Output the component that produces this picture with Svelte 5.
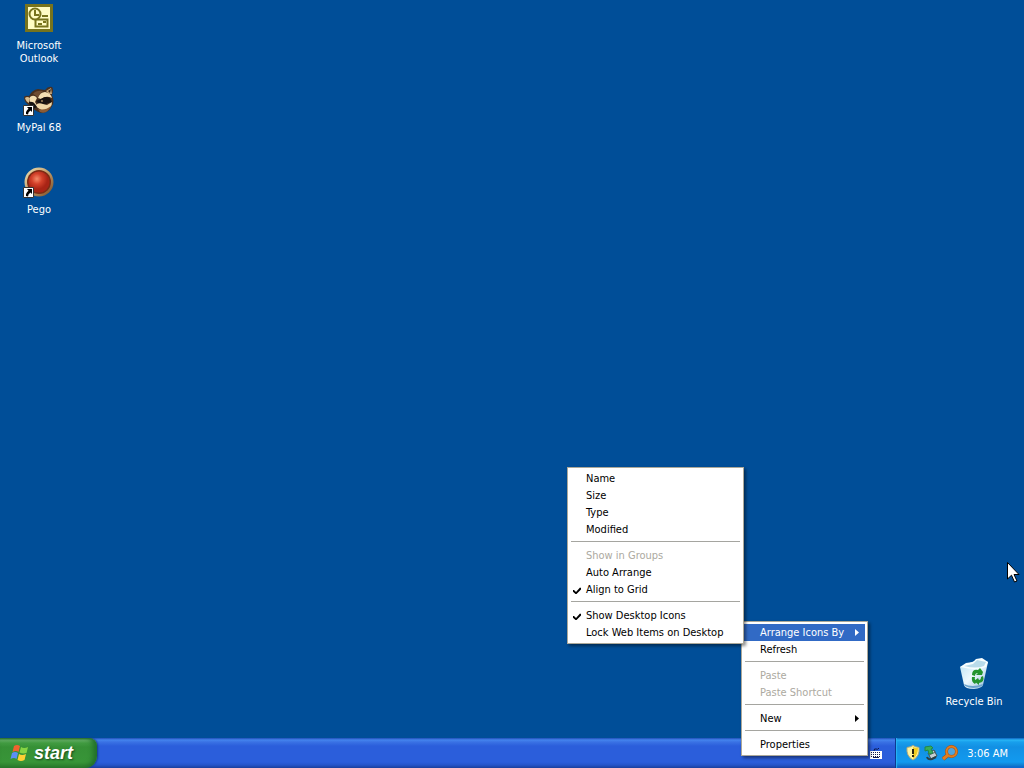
<script>
  const shortcuts = [
    { id: 'outlook', label: 'Microsoft Outlook' },
    { id: 'mypal', label: 'MyPal 68' },
    { id: 'pego', label: 'Pego' }
  ];

  const arrangeItems = [
    { label: 'Name' },
    { label: 'Size' },
    { label: 'Type' },
    { label: 'Modified' },
    { separator: true },
    { label: 'Show in Groups', disabled: true },
    { label: 'Auto Arrange' },
    { label: 'Align to Grid', checked: true },
    { separator: true },
    { label: 'Show Desktop Icons', checked: true },
    { label: 'Lock Web Items on Desktop' }
  ];

  const menuItems = [
    { label: 'Arrange Icons By', arrow: true, open: true, children: arrangeItems },
    { label: 'Refresh' },
    { separator: true },
    { label: 'Paste', disabled: true },
    { label: 'Paste Shortcut', disabled: true },
    { separator: true },
    { label: 'New', arrow: true },
    { separator: true },
    { label: 'Properties' }
  ];
</script>

{#snippet shortcutBadge()}
  <path d="M0.500 21.500h10v10h-10z" fill="#fff" stroke="#333" />
  <path d="M4 23h5v5L7.500 26.500Q5 28 5 30.500L3 30Q2.500 27 5.500 24.800z" fill="#000" />
{/snippet}

{#snippet menuList(items)}
  <ul class="menu" role="menu">
    {#each items as item}
      {#if item.separator}
        <li class="separator" role="separator"></li>
      {:else}
        <li class="entry" role="none">
          <button class="command" class:open={item.open} role="menuitem" disabled={item.disabled}>
            {#if item.checked}
              <svg class="check" width="8" height="8" viewBox="0 0 8 8" aria-hidden="true">
                <path d="M0 3h1l2 2L7 0.500L8 1v1.500L3.500 7h-1L0 4.800z" fill="#000" />
              </svg>
            {/if}
            {item.label}
            {#if item.arrow}
              <svg class="arrow" width="4" height="7" viewBox="0 0 4 7" aria-hidden="true">
                <path d="M0 0v7L4 3.500z" fill="currentColor" />
              </svg>
            {/if}
          </button>
          {#if item.children}
            <div class="submenu">{@render menuList(item.children)}</div>
          {/if}
        </li>
      {/if}
    {/each}
  </ul>
{/snippet}

<div class="screen">
  <main class="desktop">
    <div class="shortcuts">
      {#each shortcuts as s}
        <button class="shortcut">
          <svg width="32" height="32" viewBox="0 0 32 32" aria-hidden="true">
            {#if s.id === 'outlook'}
              <path d="M2 2h28v28H2z" fill="#77731d" />
              <path d="M5 5h22v22H5z" fill="#fffcc4" />
              <path d="M12.500 17.500h12v7h-12z" fill="#fffcc4" stroke="#77731d" stroke-width="2" />
              <circle cx="12" cy="12" r="5.500" fill="#fffcc4" stroke="#77731d" stroke-width="2" />
              <path d="M12 8v5h4M19 14h6M15 22h4" fill="none" stroke="#77731d" stroke-width="2" />
              <path d="M20 19h3v2h-3z" fill="#77731d" />
            {:else if s.id === 'mypal'}
              <path d="M1 14Q1 11 6 12Q9 6 15 5L22 6Q25 2 29 3Q31 5 29 11Q32 18 29 22Q26 29 18 29Q11 27 8 22Q2 20 1 14z" fill="#49301f" />
              <path d="M2 14Q4 12 7 14L6 19Q3 18 2 14z" fill="#d9bd8e" />
              <path d="M23 7L28 4L29 10L26 10z" fill="#c7a679" />
              <path d="M25 7L28 5L27 9z" fill="#382319" />
              <path d="M7 13Q11 10 14 14L12 18L15 23L8 20Q6 17 7 13z" fill="#f3ddb0" />
              <path d="M10 10Q13 6 20 7Q17 9 15 14Q13 11 10 10z" fill="#6f4c32" />
              <path d="M15 14Q17 8 22 8Q28 9 29 14Q23 11 18 15z" fill="#f4dfb5" />
              <path d="M13 17Q18 15 22 13Q28 12 29 19Q25 18 22 21L16 20z" fill="#191312" />
              <path d="M13 22Q14 18 20 20L24 21L29 18Q29 24 23 26Q17 27 13 22z" fill="#efd7a8" />
              <path d="M15 25Q22 27 28 22Q24 31 17 28z" fill="#8a5b35" />
              <path d="M6 18Q10 17 12 20L14 23L10 25L7 22z" fill="#171312" />
              <circle cx="19" cy="17" r="1" fill="#a18660" />
            {:else}
              <defs>
                <radialGradient id="pego-ball" cx="40%" cy="35%">
                  <stop offset="0" stop-color="#f48b69" />
                  <stop offset=".5" stop-color="#d3412a" />
                  <stop offset="1" stop-color="#a82415" />
                </radialGradient>
                <linearGradient id="pego-rim" x2="1" y2="1">
                  <stop offset="0" stop-color="#f0e5b7" />
                  <stop offset=".55" stop-color="#bb9360" />
                  <stop offset="1" stop-color="#704421" />
                </linearGradient>
              </defs>
              <circle cx="16" cy="16" r="14.500" fill="url(#pego-rim)" />
              <circle cx="16" cy="16" r="12" fill="#7c2b15" />
              <circle cx="16" cy="16" r="10.500" fill="url(#pego-ball)" />
            {/if}
            {#if s.id !== 'outlook'}{@render shortcutBadge()}{/if}
          </svg>
          <span class="caption">{s.label}</span>
        </button>
      {/each}
    </div>

    <button class="shortcut recycle">
      <svg width="32" height="32" viewBox="0 0 32 32" aria-hidden="true">
        <defs>
          <linearGradient id="bin" x2="1" y2="1">
            <stop offset="0" stop-color="#b5dff1" />
            <stop offset=".5" stop-color="#edf9fe" />
            <stop offset="1" stop-color="#8fb9d9" />
          </linearGradient>
        </defs>
        <path d="M2 9L6 27Q7 31 16 31Q24 30 25 27L30 4L22 1L14 4z" fill="url(#bin)" />
        <path d="M2 9L8 5L15 4L18 1L24 0L30 4L28 9Q19 13 2 9z" fill="#f8feff" />
        <path d="M6 8L15 6L19 2L28 4L26 8Q18 11 6 8z" fill="#b9dbea" />
        <path d="M6 26Q14 30 25 26L24 28Q15 32 7 28z" fill="#6ba3cd" />
        <g fill="#23942f">
          <path d="M14 17Q14 11 20 12L22 10L25 14L24 17L18 17L20 15Q17 15 17 18z" />
          <path d="M25 18Q27 24 21 25L21 27L16 23L20 20L21 22Q23 22 23 19z" />
          <path d="M14 19H17Q16 22 19 23L17 26Q13 24 14 19z" />
        </g>
      </svg>
      <span class="caption">Recycle Bin</span>
    </button>
  </main>

  <footer class="taskbar">
    <button class="start">
      <svg width="20" height="18" viewBox="0 0 20 18" aria-hidden="true">
        <path d="M4 2Q7 0 10 2L8.500 8Q6 6 2.500 8z" fill="#f0622f" />
        <path d="M11 3Q14 5 18 3L16.500 9Q13 10 9.500 8.500z" fill="#86d444" />
        <path d="M2 9Q5 7 8 9L6.500 15Q4 13 0.500 15z" fill="#5b8ff5" />
        <path d="M9 10Q12 12 16 10L14.500 16Q11 18 7.500 16z" fill="#ffd034" />
      </svg>
      <span>start</span>
    </button>
    <button class="language" aria-label="Keyboard">
      <svg width="14" height="13" viewBox="0 0 14 13" aria-hidden="true">
        <path d="M5 4Q5 1 7 2Q9 3 10 1" stroke="#0b174d" fill="none" />
        <path d="M1 4h12v8H1z" fill="#fff" />
        <path d="M2 5.500h10M2 7.500h10M2 9.500h10" stroke="#111a4d" stroke-dasharray="1 1" />
        <path d="M4 10.500h6" stroke="#111a4d" />
      </svg>
    </button>
    <div class="tray">
      <svg width="14" height="16" viewBox="0 0 14 16" aria-label="Security" role="img">
        <path d="M7 0.500Q9 2 13 2.500Q14 11 7 15Q0 11 1 2.500Q5 2 7 0.500z" fill="#fff4a0" stroke="#b6ab79" />
        <path d="M7 2Q9 3 12 3Q12 10 7 14z" fill="#f1cd22" />
        <path d="M6 4h2v5H6zM6 10h2v2H6z" fill="#292410" />
      </svg>
      <svg width="14" height="16" viewBox="0 0 14 16" aria-label="Safely remove hardware" role="img">
        <path d="M4 8L10 5L13 11L7 14z" fill="#c5d0d2" stroke="#3b5155" />
        <path d="M5 10L12 7" stroke="#516467" />
        <path d="M3 12Q4 15 8 14L12 12" stroke="#293f48" stroke-width="2" fill="none" />
        <path d="M1 2L7 1L9 3L7 4L9 8L5 9L4 5L1 6z" fill="#39ae58" stroke="#21864a" />
      </svg>
      <svg width="16" height="16" viewBox="0 0 16 16" aria-label="Search" role="img">
        <path d="M6 10L1 14" stroke="#96480f" stroke-width="4" />
        <circle cx="9.500" cy="6.500" r="5" fill="#50a4dc" stroke="#a9500f" stroke-width="3" />
        <circle cx="9.500" cy="6.500" r="5" fill="none" stroke="#e07e22" stroke-width="2" />
        <path d="M6 10L1 14" stroke="#e07e22" stroke-width="3" />
      </svg>
      <time>3:06 AM</time>
    </div>
  </footer>

  <div class="context">{@render menuList(menuItems)}</div>

  <svg class="pointer" width="13" height="21" viewBox="0 0 13 21" aria-hidden="true">
    <path d="M0.500 0.500V17L4.500 13.200L7.500 20L10 19L7 12.500H12z" fill="#fff" stroke="#000" />
  </svg>
</div>

<style>
  :global(body) {
    margin: 0;
  }

  .screen {
    position: relative;
    display: flex;
    flex-direction: column;
    min-height: 100vh;
    overflow: hidden;
    background: #004e98;
    font: 11px/13px Tahoma, 'DejaVu Sans Condensed', 'DejaVu Sans', sans-serif;
  }

  button {
    margin: 0;
    padding: 0;
    border: 0;
    background: none;
    color: inherit;
    font: inherit;
  }

  .desktop {
    position: relative;
    flex: 1;
    color: #fff;
  }

  .shortcuts {
    display: flex;
    flex-direction: column;
    align-items: flex-start;
  }

  .shortcut {
    display: flex;
    flex-direction: column;
    align-items: center;
    gap: 5px;
    width: 78px;
    height: 82px;
    padding: 2px 8px 0;
  }

  .caption {
    text-align: center;
  }

  .recycle {
    position: absolute;
    right: 11px;
    bottom: 0;
  }

  .taskbar {
    display: flex;
    align-items: stretch;
    height: 30px;
    background: linear-gradient(#1f4fb8 0, #4484ee 2px, #3a72e4 4px, #2b5edb 8px, #2b5edb 24px, #2555ca 27px, #1a3f9c 30px);
    color: #fff;
  }

  .start {
    display: flex;
    align-items: center;
    gap: 4px;
    width: 97px;
    padding: 0 0 0 10px;
    border-radius: 0 8px 12px 0;
    background: linear-gradient(#2b6c2b 0, #69b369 2px, #429c42 5px, #369036 9px, #389538 24px, #2c7c2c 30px);
    box-shadow: inset -4px 0 5px #22702a, 1px 0 2px #173c8c;
    font: italic bold 18px/20px 'Liberation Sans', Arial, sans-serif;
    text-shadow: 1px 1px 2px #17481b;
  }

  .language {
    display: flex;
    align-items: center;
    margin-left: auto;
    padding: 0 12px 0 0;
  }

  .tray {
    display: flex;
    align-items: center;
    gap: 4px;
    padding: 0 16px 0 10px;
    border-left: 1px solid #0d3a91;
    background: linear-gradient(#0c59b9 0, #28b5f6 2px, #189fec 4px, #1290e4 9px, #129aef 24px, #1180d2 27px, #095bc9 30px);
    box-shadow: inset 1px 0 1px #28b5f6;
  }

  time {
    padding-left: 5px;
  }

  .context {
    position: absolute;
    right: 156px;
    bottom: 12px;
    width: 127px;
  }

  .submenu {
    position: absolute;
    z-index: 1;
    right: 100%;
    bottom: -3px;
    width: 177px;
  }

  .menu {
    margin: 0;
    padding: 2px;
    border: 1px solid #aca899;
    background: #fff;
    box-shadow: 2px 2px 3px rgb(0 0 0 / 45%);
    color: #000;
    list-style: none;
  }

  .entry {
    position: relative;
  }

  .command {
    display: flex;
    align-items: center;
    position: relative;
    width: 100%;
    height: 17px;
    padding: 0 6px 0 16px;
    text-align: left;
    white-space: nowrap;
  }

  .command:disabled {
    color: #aca9a0;
  }

  .command.open {
    background: #316ac5;
    color: #fff;
  }

  .check {
    position: absolute;
    left: 3px;
    top: 6px;
  }

  .arrow {
    margin-left: auto;
  }

  .separator {
    height: 1px;
    margin: 3px 1px 5px;
    background: #a5a5a0;
  }

  .pointer {
    position: absolute;
    right: 4px;
    bottom: 185px;
  }
</style>
